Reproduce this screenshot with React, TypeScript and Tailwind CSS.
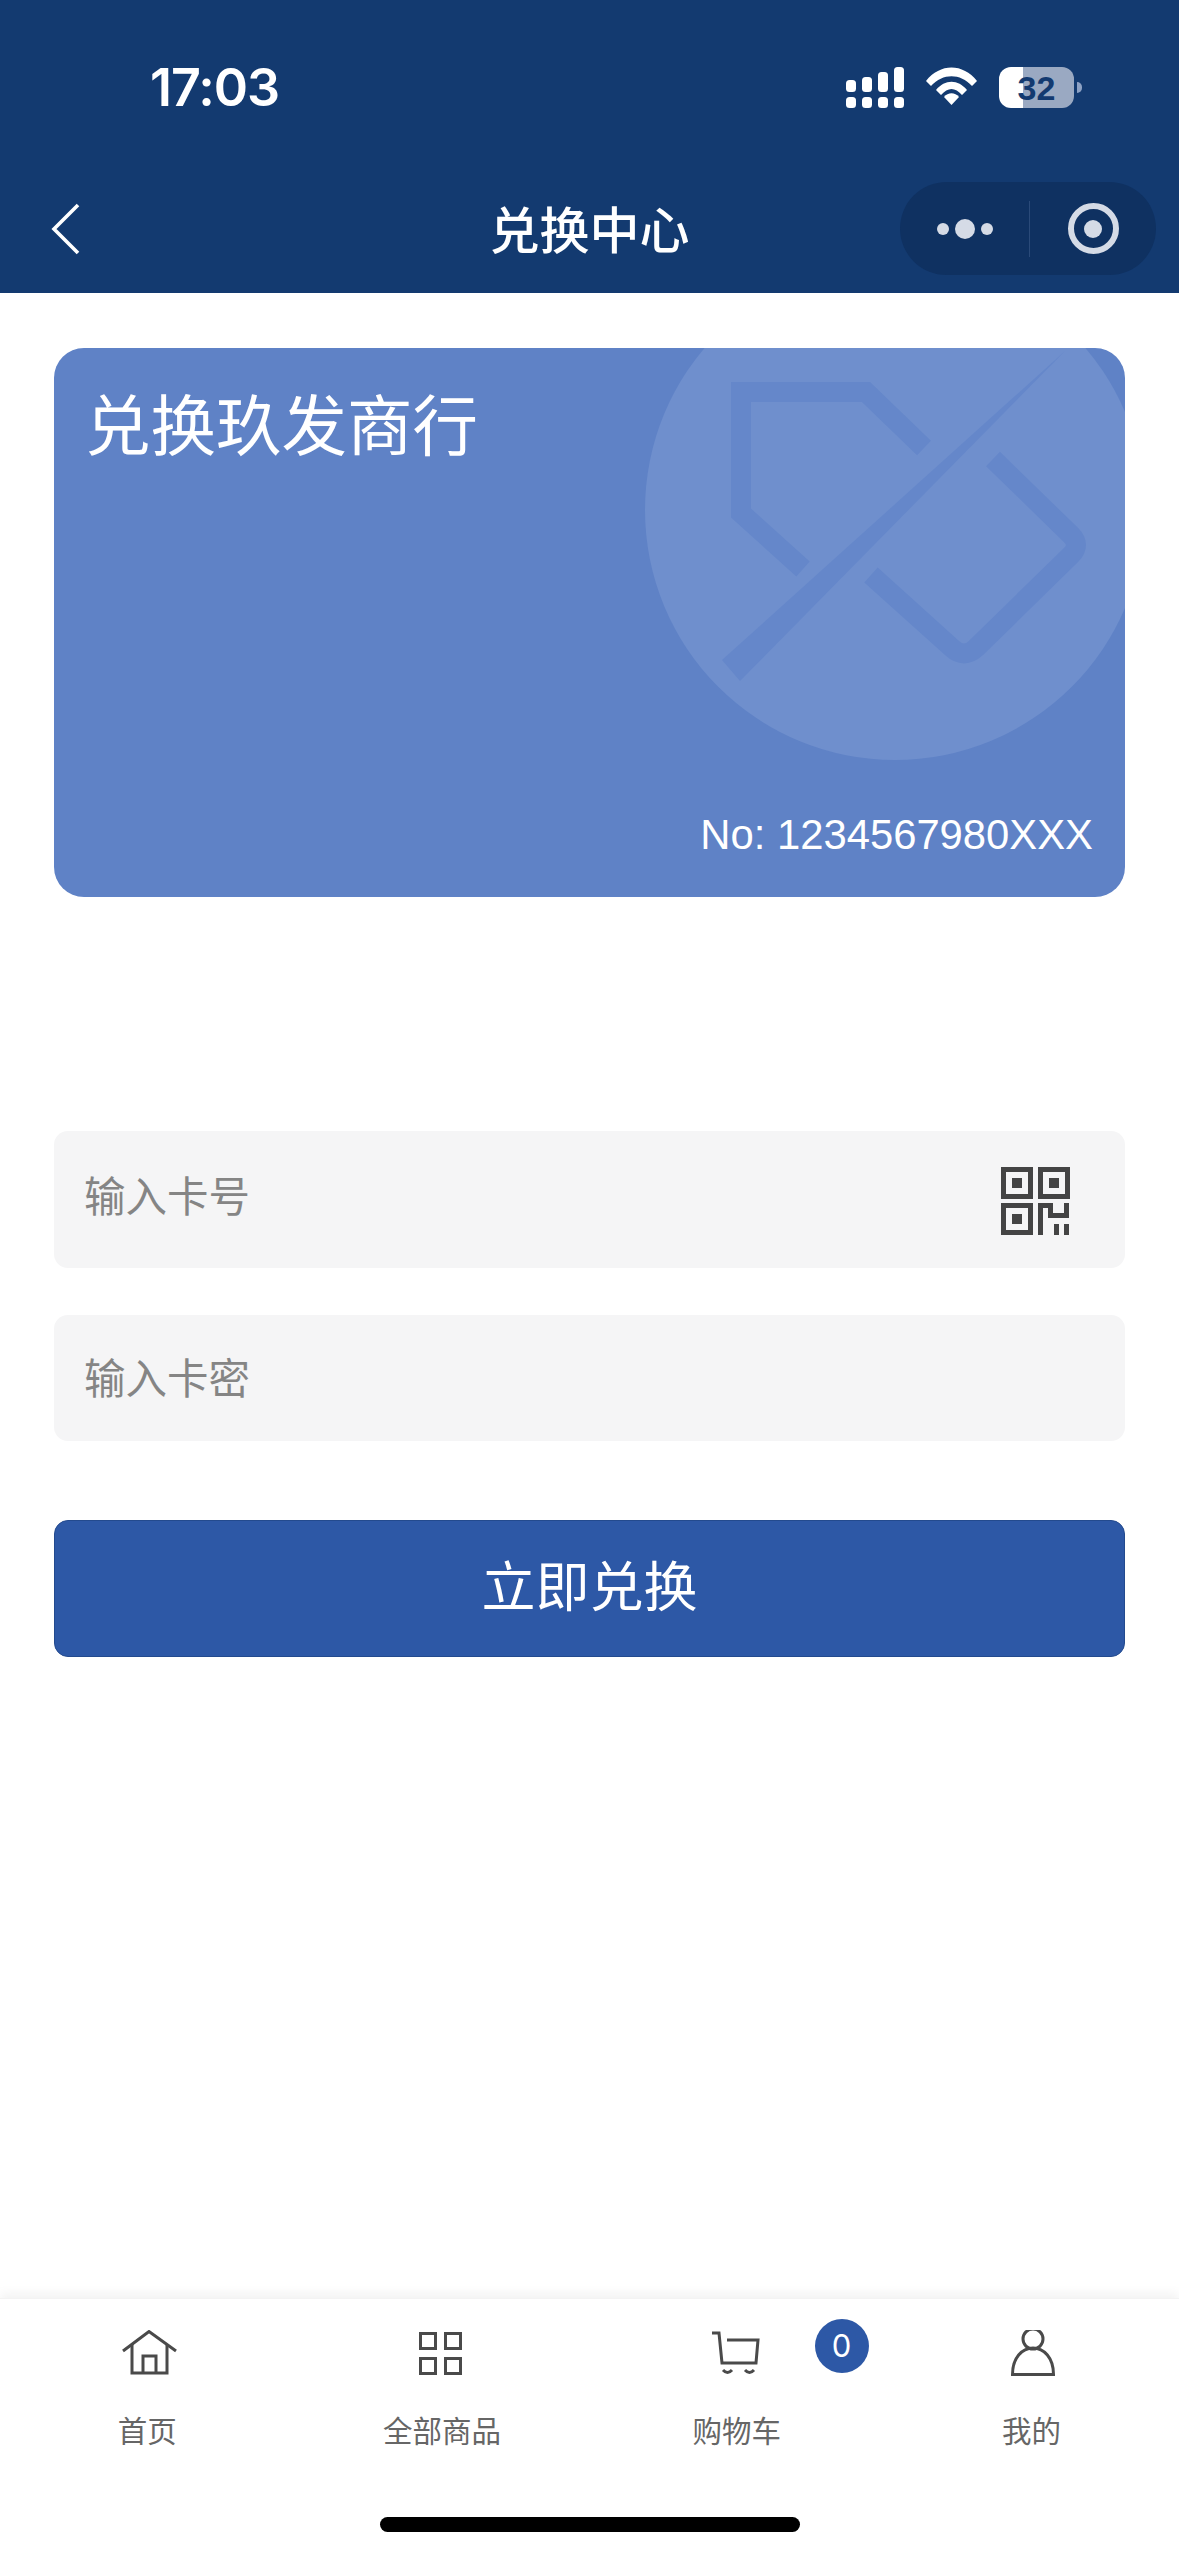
import React from 'react';

const Signal = () => (
    <svg width="58" height="41" viewBox="0 0 58 41" fill="#fff">
        <rect x="0" y="13" width="10" height="12" rx="3.5" />
        <rect x="16" y="10" width="10" height="15" rx="3.5" />
        <rect x="32" y="5" width="10" height="20" rx="3.5" />
        <rect x="48" y="0" width="10" height="25" rx="3.5" />
        <rect x="0" y="30" width="10" height="11" rx="3.5" />
        <rect x="16" y="30" width="10" height="11" rx="3.5" />
        <rect x="32" y="30" width="10" height="11" rx="3.5" />
        <rect x="48" y="30" width="10" height="11" rx="3.5" />
    </svg>
);

const Wifi = () => (
    <svg width="51" height="38" viewBox="0 0 51 38" fill="#fff">
        <path d="M0 14 C14 -4 37 -4 51 14 L46 19 C34 6 17 6 5 19 Z" />
        <path d="M10 23 C19 12 32 12 41 23 L36 28 C29 20 22 20 15 28 Z" />
        <path d="M18 30 C22 25 29 25 33 30 L25.5 38 Z" />
    </svg>
);

const Capsule = () => (
    <div className="flex items-center h-[93px] w-[256px] rounded-full bg-[#0f3161]">
        <div className="flex items-center justify-center gap-[6px] w-[129px] pl-[1px]">
            <span className="w-[12px] h-[12px] rounded-full bg-[#d5dbe6]"></span>
            <span className="w-[20px] h-[20px] rounded-full bg-[#d5dbe6]"></span>
            <span className="w-[12px] h-[12px] rounded-full bg-[#d5dbe6]"></span>
        </div>
        <div className="w-px h-[56px] bg-[#2a4a79]"></div>
        <div className="flex flex-1 items-center justify-center">
            <div className="flex items-center justify-center w-[51px] h-[51px] rounded-full border-[6px] border-[#d5dbe6]">
                <span className="w-[18px] h-[18px] rounded-full bg-[#d5dbe6]"></span>
            </div>
        </div>
    </div>
);

const Header = () => (
    <header className="bg-[#133a70] h-[293px] shrink-0 text-white">
        <div className="flex items-start justify-between h-[176px] pt-[67px] pl-[150px] pr-[97px]">
            <span className="font-['Inter',sans-serif] font-semibold text-[52px] leading-[41px] tracking-[-1px]">17:03</span>
            <div className="flex items-start">
                <Signal />
                <div className="ml-[22px]"><Wifi /></div>
                <div className="ml-[22px] flex items-center justify-center w-[75px] h-[41px] rounded-[12px] bg-[linear-gradient(90deg,#fff_32%,#9aa9c2_32%)] text-[#133a70] font-bold text-[34px] leading-none">
                    32
                </div>
                <div className="ml-[3px] mt-[15px] w-[5px] h-[11px] rounded-r-full bg-[#8ea2c4]"></div>
            </div>
        </div>
        <div className="flex items-center h-[105px] px-[23px]">
            <div className="flex-1">
                <svg className="ml-[28px]" width="29" height="52" viewBox="0 0 29 52" fill="none" stroke="#fff" strokeWidth="3.6">
                    <path d="M27 2 L3 26 L27 50" />
                </svg>
            </div>
            <h1 className="mt-[6px] font-medium text-[50px] leading-none">兑换中心</h1>
            <div className="flex-1 flex justify-end">
                <Capsule />
            </div>
        </div>
    </header>
);

const Card = () => (
    <div className="relative flex flex-col justify-between h-[549px] rounded-[30px] overflow-hidden bg-[#5f82c6] pt-[47px] pb-[37px] pl-[31px] pr-[32px] text-white">
        {/* circle and logo watermark, coords are card pixels */}
        <svg className="absolute inset-0" width="1071" height="549" viewBox="0 0 1071 549" fill="none">
            <circle cx="841" cy="162" r="250" fill="#6f8fcd" />
            <g stroke="#6587ca" strokeWidth="20">
                <path d="M870 100 L812 44 H687 V165 L749 221" />
                <path d="M939 111 L1017 187 Q1027 197 1017 207 L922 300 Q910 311 898 300 L817 227" />
            </g>
            <path d="M1011 3 L668 312 L686 333 Z" fill="#6587ca" />
        </svg>
        <p className="relative text-[65.5px] leading-none">兑换玖发商行</p>
        <p className="relative text-right text-[41.8px] leading-[50px]">No: 1234567980XXX</p>
    </div>
);

const QrIcon = () => (
    <svg className="mt-[4px]" width="70" height="70" viewBox="0 0 70 70" fill="#444">
        <path fillRule="evenodd" d="M1 0 H33 V32 H1 Z M6 5 V27 H28 V5 Z" />
        <rect x="12" y="11" width="10" height="10" />
        <path fillRule="evenodd" d="M38 0 H70 V32 H38 Z M43 5 V27 H65 V5 Z" />
        <rect x="49" y="11" width="10" height="10" />
        <path fillRule="evenodd" d="M1 36 H33 V68 H1 Z M6 41 V63 H28 V41 Z" />
        <rect x="12" y="47" width="10" height="10" />
        <path d="M38 36 H53 V46 H64 V36 H69 V51 H48 V41 H43 V68 H38 Z" />
        <rect x="54" y="57" width="5" height="11" />
        <rect x="64" y="57" width="5" height="11" />
    </svg>
);

const Form = () => (
    <div className="flex flex-col mt-[234px]">
        <div className="flex items-center justify-between h-[137px] rounded-[14px] bg-[#f5f5f6] pl-[30px] pr-[55px]">
            <span className="mb-[3px] text-[41.5px] text-[#858585]">输入卡号</span>
            <QrIcon />
        </div>
        <div className="flex items-center h-[126px] mt-[47px] rounded-[14px] bg-[#f5f5f6] pl-[30px]">
            <span className="mt-[5px] text-[41.5px] text-[#858585]">输入卡密</span>
        </div>
        <button className="h-[137px] mt-[79px] rounded-[14px] bg-[#2d58a6] border border-[#234a8e] text-white text-[54px]">
            立即兑换
        </button>
    </div>
);

const tabs = [
    {
        label: '首页',
        icon: (
            <>
                <path d="M6 21 L32 1.5 L59 21" />
                <path d="M15 14 V43 H50 V14" />
                <path d="M26 43 V26 H39 V43" />
            </>
        ),
    },
    {
        label: '全部商品',
        icon: (
            <>
                <rect x="8.5" y="3.5" width="15" height="15" />
                <rect x="33.5" y="3.5" width="15" height="15" />
                <rect x="8.5" y="28.5" width="15" height="15" />
                <rect x="33.5" y="28.5" width="15" height="15" />
            </>
        ),
    },
    {
        label: '购物车',
        icon: (
            <>
                <path d="M5 3 H12 L15 33 H49 L51 10 H20" />
                <path d="M16 40 Q20.5 45 25 40" />
                <path d="M38 40 Q42.5 45 47 40" />
            </>
        ),
    },
    {
        label: '我的',
        icon: (
            <>
                <circle cx="31" cy="9" r="10" />
                <path d="M10.5 44.5 C10.5 28 20 18 31 18 C42 18 51.5 28 51.5 44.5 Z" />
            </>
        ),
    },
];

const TabBar = () => (
    <footer className="flex flex-col items-center h-[258px] shrink-0 border-t border-[#f3f3f3] shadow-[0_-5px_10px_rgba(0,0,0,0.05)]">
        <div className="grid grid-cols-4 w-full pt-[31px]">
            {tabs.map((tab) => (
                <div key={tab.label} className="relative flex flex-col items-center">
                    <svg width="60" height="48" viewBox="0 0 60 48" fill="none" stroke="#4a4a4a" strokeWidth="3">
                        {tab.icon}
                    </svg>
                    <span className="mt-[34px] text-[29.5px] leading-[40px] text-[#666]">{tab.label}</span>
                    {tab.label === '购物车' && (
                        <span className="absolute left-[225px] top-[-11px] flex items-center justify-center w-[54px] h-[54px] rounded-full bg-[#2d58a6] text-white text-[31px] font-['Inter',sans-serif]">
                            0
                        </span>
                    )}
                </div>
            ))}
        </div>
        <div className="w-[420px] h-[15px] mt-[65px] rounded-full bg-black"></div>
    </footer>
);

const App = () => {
    return (
        <div className="flex flex-col h-[2556px] w-[1179px] bg-white font-['Liberation_Sans','Noto_Sans_CJK_SC',sans-serif]">
            <Header />
            <main className="flex-1 px-[54px] pt-[55px]">
                <Card />
                <Form />
            </main>
            <TabBar />
        </div>
    );
};

export default App;
